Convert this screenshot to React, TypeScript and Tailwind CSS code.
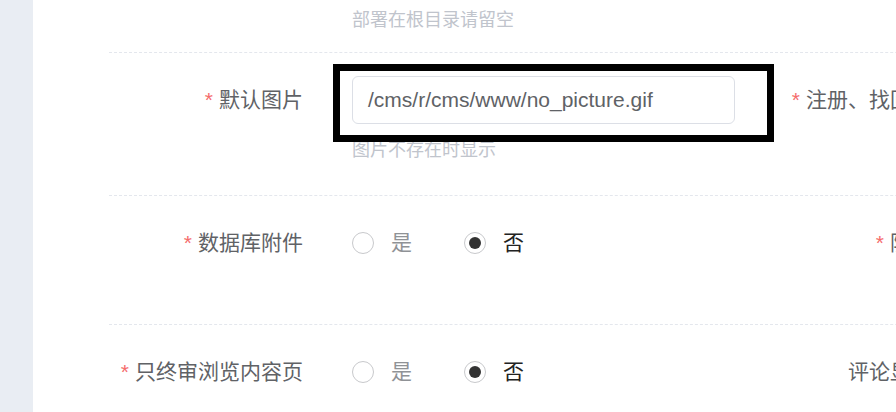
import React from "react"

const font = { fontFamily: '"Liberation Sans", "Noto Sans CJK SC", sans-serif' }

function Label({ text, required = true }: { text: string; required?: boolean }) {
  return (
    <div className="w-[243px] shrink-0 pr-[49px] h-[48px] flex items-center justify-end whitespace-nowrap text-[21px] text-[#606266]">
      {required && <span className="text-[#f56c6c] mr-[6px]">*</span>}
      {text}
    </div>
  )
}

function Radio({ checked, text }: { checked?: boolean; text: string }) {
  return (
    <label className="flex items-center mr-[52px]">
      <span className="w-[22px] h-[22px] rounded-full border-[1.5px] border-[#c8c9cc] bg-white flex items-center justify-center">
        {checked && <span className="w-[12px] h-[12px] rounded-full bg-[#333333]" />}
      </span>
      <span className={"ml-[17px] text-[21px] " + (checked ? "text-[#222222]" : "text-[#8f9296]")}>{text}</span>
    </label>
  )
}

function Help({ text }: { text: string }) {
  return <div className="mt-[13px] text-[18px] leading-[27px] text-[#c0c4cc] whitespace-nowrap">{text}</div>
}

function Input({ value }: { value: string }) {
  return (
    <div className="w-[383px] h-[48px] rounded-[6px] border border-[#dcdfe6] bg-white flex items-center pl-[15px] text-[21px] text-[#606266]">
      {value}
    </div>
  )
}

export default function App() {
  return (
    <div className="flex w-[896px] h-[412px] overflow-hidden bg-white" style={font}>
      {/* side strip */}
      <div className="w-[33px] shrink-0 bg-[#e9edf3]" />

      <div className="flex-1 overflow-hidden pl-[76px]">
        <div className="w-[1300px] -mt-[77px]">
          {/* row 1, scrolled mostly out of view */}
          <div className="grid grid-cols-[650px_650px] items-start pt-[23px] pb-[18px] border-b border-dashed border-[#e4e7ed]">
            <div className="flex">
              <div className="w-[243px] shrink-0 h-[48px]" />
              <div>
                <div className="w-[383px] h-[48px] rounded-[6px] border border-[#dcdfe6]" />
                <Help text="部署在根目录请留空" />
              </div>
            </div>
            <div />
          </div>

          {/* row 2 */}
          <div className="grid grid-cols-[650px_650px] items-start pt-[23px] pb-[31px] border-b border-dashed border-[#e4e7ed]">
            <div className="flex">
              <Label text="默认图片" />
              <div>
                <Input value="/cms/r/cms/www/no_picture.gif" />
                <Help text="图片不存在时显示" />
              </div>
            </div>
            <div className="flex">
              <Label text="注册、找回密码" />
            </div>
          </div>

          {/* row 3 */}
          <div className="grid grid-cols-[650px_650px] items-start pt-[23px] pb-[57px] border-b border-dashed border-[#e4e7ed]">
            <div className="flex">
              <Label text="数据库附件" />
              <div className="flex items-center h-[48px]">
                <Radio text="是" />
                <Radio text="否" checked />
              </div>
            </div>
            <div className="flex">
              <Label text="防盗链" />
            </div>
          </div>

          {/* row 4 */}
          <div className="grid grid-cols-[650px_650px] items-start pt-[23px] pb-[40px]">
            <div className="flex">
              <Label text="只终审浏览内容页" />
              <div className="flex items-center h-[48px]">
                <Radio text="是" />
                <Radio text="否" checked />
              </div>
            </div>
            <div className="flex">
              <Label text="评论显示量" required={false} />
            </div>
          </div>
        </div>
      </div>

      {/* annotation frame */}
      <div className="absolute left-[333px] top-[64px] w-[441px] h-[78px] border-[7px] border-black pointer-events-none" />
    </div>
  )
}
